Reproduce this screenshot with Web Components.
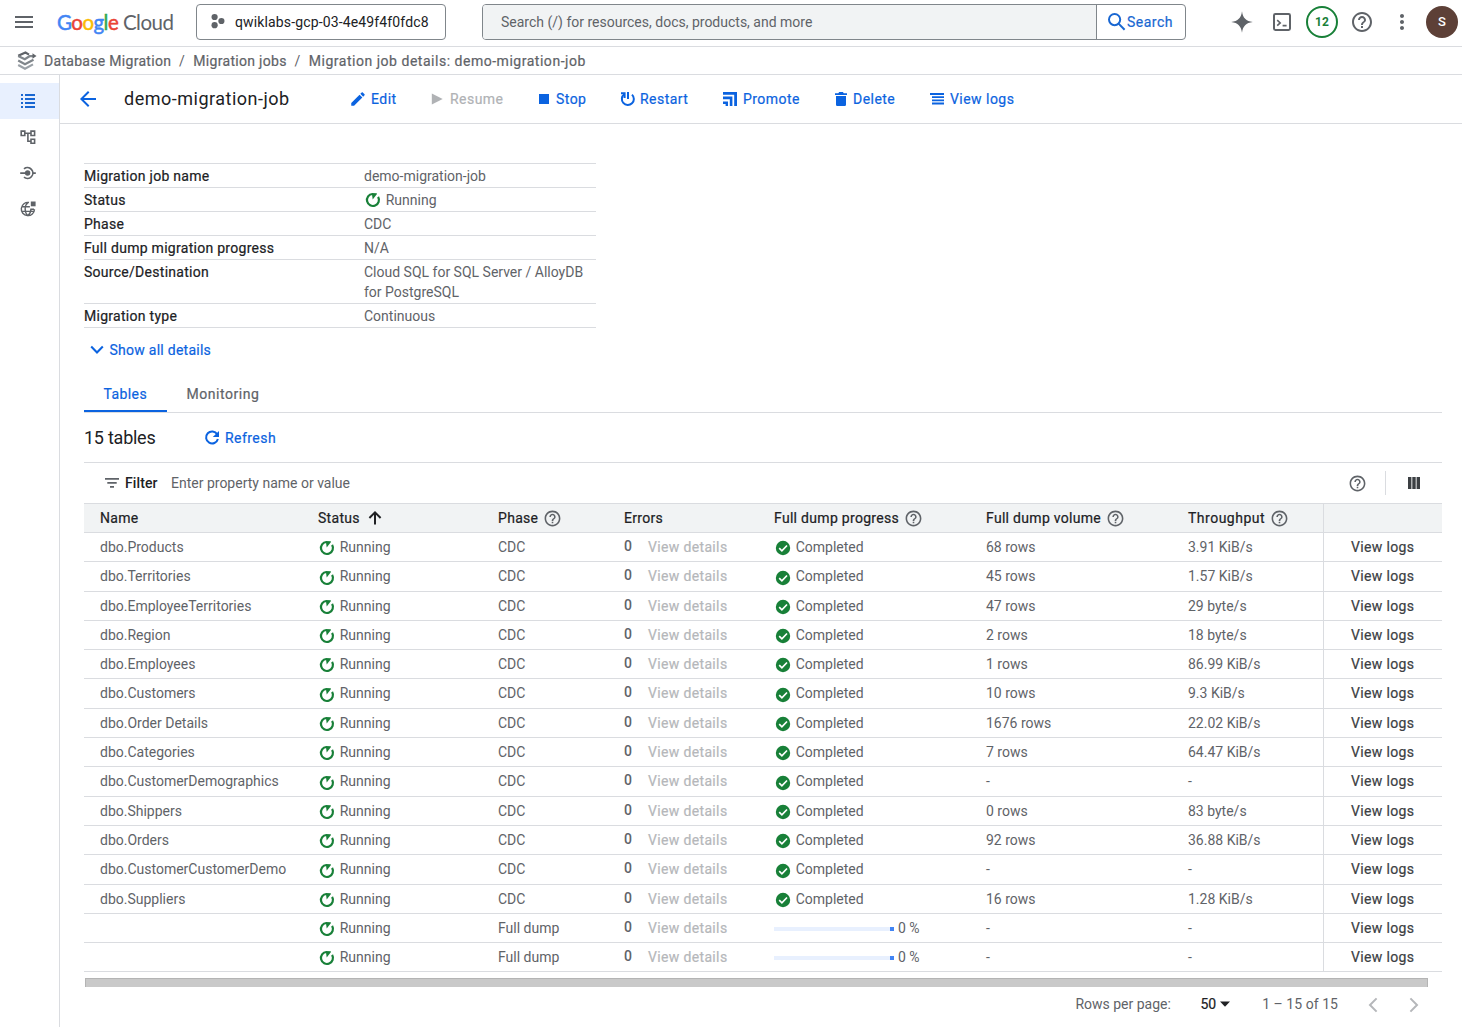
<!DOCTYPE html>
<html lang="en">
<head>
<meta charset="utf-8">
<title>demo-migration-job</title>
<style>
  body {
    margin: 0;
    background: #fff;
    color: #5f6368;
    font: 14px/20px Roboto, Arial, sans-serif;
  }
</style>
</head>
<body>
<console-page></console-page>

<script>
const ICONS = {
  menu: [24, '<path d="M3 18h18v-2H3v2zm0-5h18v-2H3v2zm0-7v2h18V6H3z"/>'],
  project: [18, '<circle cx="5.6" cy="4" r="3.1"/><circle cx="12.4" cy="8" r="3.1"/><circle cx="5.6" cy="12.2" r="3.1"/>'],
  search: [20, '<g fill="none" stroke="currentColor" stroke-width="2"><circle cx="7.6" cy="7.6" r="5.6"/><path d="M11.6 11.6l6 6.2"/></g>'],
  spark: [24, '<path d="M12 1.2C12.9 8 16 11.1 22.8 12 16 12.9 12.9 16 12 22.8 11.1 16 8 12.9 1.2 12 8 11.1 11.1 8 12 1.2z"/>'],
  shell: [20, '<rect x="2" y="2" width="16" height="16" rx="1.4" fill="none" stroke="currentColor" stroke-width="2"/><path d="M5.2 8.2l3 2.7-3 2.7M10.6 13.6h4" fill="none" stroke="currentColor" stroke-width="1.6"/>'],
  help: [24, '<path d="M11 18h2v-2h-2v2zm1-16C6.480 2 2 6.480 2 12s4.480 10 10 10 10-4.480 10-10S17.520 2 12 2zm0 18c-4.410 0-8-3.590-8-8s3.590-8 8-8 8 3.590 8 8-3.590 8-8 8zm0-14c-2.210 0-4 1.790-4 4h2c0-1.100.9-2 2-2s2 .9 2 2c0 2-3 1.750-3 5h2c0-2.250 3-2.500 3-5 0-2.210-1.790-4-4-4z"/>'],
  more: [24, '<path d="M12 8c1.100 0 2-.9 2-2s-.9-2-2-2-2 .9-2 2 .9 2 2 2zm0 2c-1.100 0-2 .9-2 2s.9 2 2 2 2-.9 2-2-.9-2-2-2zm0 6c-1.100 0-2 .9-2 2s.9 2 2 2 2-.9 2-2-.9-2-2-2z"/>'],
  product: [20, '<g fill="none" stroke-width="2.200"><path d="M1.200 4.800L8.500 1.500 12 3.600" stroke="#5f6368"/><path d="M1.200 4.900L7.800 8.200 12.500 5.200H17" stroke="#80868b"/><path d="M1.200 9.500L8 13.200 16.500 8.700" stroke="#80868b"/><path d="M1.200 14L8 17.700 16 13.400" stroke="#9aa0a6"/></g><path d="M15.500 2.200l4 2.900-4 2.600z"/>'],
  list: [18, '<path d="M2 2h2v2H2zM6 2h10v2H6zM2 6h2v2H2zM6 6h10v2H6zM2 10h2v2H2zM6 10h10v2H6zM2 14h2v2H2zM6 14h10v2H6z"/>'],
  tree: [18, '<g fill="none" stroke="currentColor" stroke-width="1.600"><path d="M2.200 3.100h3.600v4.400H2.200zM12 3.100h3.600v4.400H12zM12 11.200h3.600v4H12zM5.800 5.200H12M8.900 5.200v8H12"/></g>'],
  connect: [18, '<path d="M1.200 8.200H6v1.800H1.200zM13.500 8.200h3.300v1.800h-3.300z"/><circle cx="8.600" cy="9" r="2.700"/><path d="M5 4.900A5.400 5.400 0 1 1 5 13.200" fill="none" stroke="currentColor" stroke-width="1.700"/>'],
  globe: [18, '<g fill="none" stroke="currentColor" stroke-width="1.400"><path d="M10 2.500a6.600 6.600 0 1 0 5.500 6.700M9 2.500C5.200 5.500 5.200 12.500 9 15.700 11.500 13.500 12 11 12 8.600M2.900 6.700h8M2.900 11.400h12.200M15 9.200H12"/></g><path d="M11.800 1.500h4.800v4.800h-4.800z"/>'],
  back: [24, '<path d="M20 11H7.830l5.590-5.590L12 4l-8 8 8 8 1.410-1.410L7.830 13H20v-2z"/>'],
  edit: [24, '<path d="M3 17.250V21h3.750L17.810 9.940l-3.750-3.750L3 17.250zM20.710 7.040c.39-.39.39-1.020 0-1.410l-2.340-2.340c-.39-.39-1.020-.39-1.410 0l-1.830 1.830 3.750 3.750 1.830-1.830z"/>'],
  play: [18, '<path d="M3.800 3.500v11l10.900-5.500z"/>'],
  stop: [18, '<path d="M5 4h10v10H5z"/>'],
  restart: [18, '<g fill="none" stroke="currentColor" stroke-width="2"><path d="M6.200 4.200A6 6 0 1 0 14 4.600M10 2V9"/><path d="M3 3.200h3.600V8"/></g>'],
  promote: [18, '<path d="M2 2h14v14h-2.800V4.800H2zM2 6.600h9.400V16H8.800V9.200H2zM2 11.600h5V16H4.600v-2H2z"/>'],
  trash: [18, '<path d="M4 3.300h3.300L8.200 2h3.700l.9 1.300H16v1.800H4zM5 6h10v8.400c0 1-.7 1.600-1.600 1.600H6.600C5.700 16 5 15.400 5 14.400z"/>'],
  logs: [18, '<path d="M2 3h14v1.900H2zM4 6.200h12v1.900H4zM4 9.400h12v1.900H4zM4 12.600h12v1.900H4z"/>'],
  down: [18, '<path d="M3.200 5.600L9 11.400l5.800-5.800" fill="none" stroke="currentColor" stroke-width="2.100"/>'],
  refresh: [18, '<path d="M14.200 5.300A6 6 0 1 0 14.900 10" fill="none" stroke="currentColor" stroke-width="2"/><path d="M16 2v6H9.800z"/>'],
  filter: [18, '<path d="M2 4h14v1.800H2zM4.300 8h9.400v1.800H4.300zM7 12h4v1.800H7z"/>'],
  columns: [18, '<path d="M3 3h3.400v12H3zM7.300 3h3.400v12H7.300zM11.600 3H15v12h-3.400z"/>'],
  up: [18, '<path d="M9 15.500V3.600M3.400 9L9 3.400 14.600 9" fill="none" stroke="currentColor" stroke-width="2"/>'],
  running: [18, '<path d="M14.100 5.900A6 6 0 1 1 8.500 3" fill="none" stroke="currentColor" stroke-width="2.200"/><path d="M7.800 1.900l4.900.3.300.9-4.300 5.300z"/>'],
  done: [18, '<circle cx="9" cy="9" r="7.200"/><path d="M5.200 9.200l2.700 2.600 5.100-5.300" fill="none" stroke="#fff" stroke-width="1.700"/>'],
  left: [18, '<path d="M12.600 2.400L6 9l6.600 6.600" fill="none" stroke="currentColor" stroke-width="2"/>'],
  right: [18, '<path d="M5.400 2.400L12 9l-6.600 6.600" fill="none" stroke="currentColor" stroke-width="2"/>'],
  caret: [18, '<path d="M4 6.500h10l-5 5.200z"/>']
}

// half-step between regular and medium, shared by labels and buttons
const SEMI = 'font-weight: 400; -webkit-text-stroke: .2px;'

class ShadowElement extends HTMLElement {
  constructor() {
    super()
    this.attachShadow({mode: 'open'})
  }

  connectedCallback() {
    this.shadowRoot.innerHTML = `<style>${this.constructor.style}</style>${this.render()}`
  }
}

class GcIcon extends ShadowElement {
  static style = `
    :host { display: inline-flex; flex: none; }
    svg { display: block; fill: currentColor; }
  `

  render() {
    const [box, shape] = ICONS[this.getAttribute('name')]
    const size = this.getAttribute('size') || 18
    return `<svg width="${size}" height="${size}" viewBox="0 0 ${box} ${box}">${shape}</svg>`
  }
}
customElements.define('gc-icon', GcIcon)

class TopBar extends ShadowElement {
  static style = `
    :host {
      display: flex;
      align-items: center;
      box-sizing: border-box;
      height: 47px;
      padding: 0 4px 2px 12px;
      border-bottom: 1px solid #dadce0;
    }
    .logo {
      width: 139px;
      margin-left: 21px;
      font: 20.5px/22px Lato, sans-serif;
      letter-spacing: -.53px;
      white-space: nowrap;
    }
    .logo b { font-weight: 400; -webkit-text-stroke: .5px; }
    .project, .search {
      display: flex;
      align-items: center;
      box-sizing: border-box;
      height: 36px;
      border: 1px solid #80868b;
      border-radius: 4px;
    }
    .project { width: 250px; padding-left: 12px; color: #202124; gap: 8px; letter-spacing: .14px; }
    .project gc-icon { color: #5f6368; }
    .search { width: 704px; margin-left: 36px; overflow: hidden; }
    .query { flex: 1; padding-left: 18px; line-height: 34px; background: #f1f3f4; }
    .go {
      display: flex;
      align-items: center;
      box-sizing: border-box;
      width: 89px;
      height: 100%;
      padding-left: 10px;
      border-left: 1px solid #80868b;
      color: #1967d2;
      ${SEMI}
      letter-spacing: .5px;
    }
    .tools { display: grid; grid-template-columns: repeat(6, 40px); place-items: center; margin-left: auto; margin-right: -4px; }
    .count, .avatar { box-sizing: border-box; width: 32px; height: 32px; border-radius: 50%; text-align: center; }
    .count { border: 2px solid #188038; color: #188038; font: bold 12px/28px Roboto, sans-serif; }
    .avatar { background: #5d4037; color: #fff; font: 500 13px/32px Roboto, sans-serif; }
  `

  render() {
    return `
    <gc-icon name="menu" size="24"></gc-icon>
    <div class="logo"><b style="color:#4285f4">G</b><b style="color:#ea4335">o</b><b style="color:#fbbc04">o</b><b style="color:#4285f4">g</b><b style="color:#34a853">l</b><b style="color:#ea4335">e</b> Cloud</div>
    <div class="project"><gc-icon name="project"></gc-icon><slot name="project"></slot></div>
    <div class="search">
      <div class="query">Search (/) for resources, docs, products, and more</div>
      <div class="go"><gc-icon name="search" size="20"></gc-icon>Search</div>
    </div>
    <div class="tools">
      <gc-icon name="spark" size="24"></gc-icon>
      <gc-icon name="shell" size="20"></gc-icon>
      <div class="count">12</div>
      <gc-icon name="help" size="24"></gc-icon>
      <gc-icon name="more" size="24"></gc-icon>
      <div class="avatar">S</div>
    </div>`
  }
}
customElements.define('top-bar', TopBar)

class BreadCrumbs extends ShadowElement {
  static style = `
    :host {
      display: flex;
      align-items: center;
      height: 27px;
      padding-left: 17px;
      border-bottom: 1px solid #dadce0;
      ${SEMI}
      letter-spacing: .3px;
    }
    gc-icon { margin-right: 7px; }
    span:last-child { letter-spacing: .52px; }
    i { font-style: normal; -webkit-text-stroke: 0; margin: 0 8.200px 0 7.800px; }
  `

  render() {
    const path = this.getAttribute('path').split('|')
    return `<gc-icon name="product" size="20"></gc-icon>${path.map(p => `<span>${p}</span>`).join('<i>/</i>')}`
  }
}
customElements.define('bread-crumbs', BreadCrumbs)

class SideNav extends ShadowElement {
  static style = `
    :host { display: block; width: 59px; padding-top: 8px; border-right: 1px solid #dadce0; }
    div { display: flex; align-items: center; height: 36px; padding-left: 19px; }
    .on { background: #e8f0fe; color: #1967d2; }
  `

  render() {
    return ['list', 'tree', 'connect', 'globe'].map((name, i) =>
      `<div class="${i === 0 ? 'on' : ''}"><gc-icon name="${name}"></gc-icon></div>`).join('')
  }
}
customElements.define('side-nav', SideNav)

class ActionButton extends ShadowElement {
  static style = `
    :host {
      display: inline-flex;
      align-items: center;
      gap: 4px;
      color: #0b63e0;
      ${SEMI}
      letter-spacing: .46px;
      white-space: nowrap;
    }
    :host([disabled]) { color: #b0b2b5; }
  `

  render() {
    return `<gc-icon name="${this.getAttribute('icon')}"></gc-icon><slot></slot>`
  }
}
customElements.define('action-button', ActionButton)

class PageHeader extends ShadowElement {
  static style = `
    :host {
      display: flex;
      align-items: center;
      height: 48px;
      padding-left: 16px;
      border-bottom: 1px solid #dadce0;
    }
    gc-icon { color: #0b63e0; }
    h1 { width: 225px; margin: 0 0 0 24px; color: #202124; font-size: 18px; font-weight: 400; letter-spacing: .5px; }
    .actions { display: grid; grid-template-columns: 79px 106px 84px 103px 110px 97px auto; }
  `

  render() {
    return `
    <gc-icon name="back" size="24"></gc-icon>
    <h1>${this.getAttribute('heading')}</h1>
    <div class="actions"><slot></slot></div>`
  }
}
customElements.define('page-header', PageHeader)

class StatusText extends ShadowElement {
  static style = `
    :host { display: flex; align-items: center; gap: 3.700px; }
    gc-icon { color: #188038; position: relative; top: var(--icon-drop, 0); }
  `

  render() {
    return `<gc-icon name="${this.getAttribute('icon')}"></gc-icon><slot></slot>`
  }
}
customElements.define('status-text', StatusText)

class DetailRow extends ShadowElement {
  static style = `
    :host {
      display: grid;
      grid-template-columns: 280px 232px;
      padding: 2px 0 1px;
      border-bottom: 1px solid #dadce0;
    }
    .label { color: #202124; ${SEMI} letter-spacing: .28px; }
  `

  render() {
    return `<div class="label">${this.getAttribute('label')}</div><div><slot></slot></div>`
  }
}
customElements.define('detail-row', DetailRow)

class TabStrip extends ShadowElement {
  static style = `
    :host { display: flex; height: 36px; border-bottom: 1px solid #dadce0; ${SEMI} letter-spacing: .55px; }
    div { box-sizing: border-box; padding: 8px 19.500px 0; }
    .on { width: 83px; color: #0b63e0; border-bottom: 2px solid #0b63e0; letter-spacing: .4px; }
  `

  render() {
    return `<div class="on">Tables</div><div>Monitoring</div>`
  }
}
customElements.define('tab-strip', TabStrip)

class FilterBar extends ShadowElement {
  static style = `
    :host {
      display: flex;
      align-items: center;
      height: 40px;
      padding: 0 19px;
      border-top: 1px solid #dadce0;
    }
    b { width: 46px; margin-left: 4px; color: #202124; font-weight: 500; letter-spacing: .1px; }
    .help { margin-left: auto; }
    .cols { display: flex; align-items: center; height: 24px; margin-left: 18.500px; padding-left: 19px; border-left: 1px solid #dadce0; color: #3c4043; }
  `

  render() {
    return `
    <gc-icon name="filter"></gc-icon><b>Filter</b><span>Enter property name or value</span>
    <gc-icon class="help" name="help" size="19"></gc-icon>
    <div class="cols"><gc-icon name="columns"></gc-icon></div>`
  }
}
customElements.define('filter-bar', FilterBar)

const GRID = 'grid-template-columns: 218px 180px 126px 150px 212px 202px 151px 119px;'

class TableHead extends ShadowElement {
  static style = `
    :host {
      display: grid;
      ${GRID}
      height: 28px;
      border: solid #dadce0;
      border-width: 1px 0;
      background: #f1f3f4;
      color: #202124;
      ${SEMI}
      letter-spacing: .3px;
    }
    div { display: flex; align-items: center; gap: 5px; padding-left: 16px; }
    gc-icon { color: #5f6368; }
    gc-icon[name=up] { color: #202124; margin-left: 1px; }
    .speed { letter-spacing: .5px; }
    .end { border-left: 1px solid #dadce0; }
  `

  render() {
    const help = '<gc-icon name="help" size="19"></gc-icon>'
    return `
    <div>Name</div>
    <div>Status <gc-icon name="up"></gc-icon></div>
    <div>Phase ${help}</div>
    <div>Errors</div>
    <div>Full dump progress ${help}</div>
    <div>Full dump volume ${help}</div>
    <div class="speed">Throughput ${help}</div>
    <div class="end"></div>`
  }
}
customElements.define('table-head', TableHead)

class TableRow extends ShadowElement {
  static style = `
    :host {
      display: grid;
      ${GRID}
      box-sizing: border-box;
      height: 29.297px;
      border-bottom: 1px solid #dadce0;
      --icon-drop: 1.300px;
    }
    .cell { display: flex; align-items: center; padding: 0 0 .34px 16px; white-space: nowrap; }
    .zero { font-weight: 500; margin: -2px 16px 0 0; }
    .off { color: #b5b7ba; ${SEMI} letter-spacing: .35px; }
    .bar { display: flex; justify-content: flex-end; width: 120px; height: 4px; margin: 1.500px 4px 0 0; background: #e8f0fe; }
    .bar::after { content: ""; width: 4px; background: #4285f4; }
    .end { padding-left: 27px; border-left: 1px solid #dadce0; color: #3c4043; ${SEMI} letter-spacing: .35px; }
  `

  render() {
    const [name, volume, speed] = this.getAttribute('values').split('|')
    const dumping = this.hasAttribute('dumping')
    const progress = dumping
      ? '<div class="bar"></div>0 %'
      : '<status-text icon="done">Completed</status-text>'
    return `
    <div class="cell">${name}</div>
    <div class="cell"><status-text icon="running">Running</status-text></div>
    <div class="cell">${dumping ? 'Full dump' : 'CDC'}</div>
    <div class="cell"><span class="zero">0</span><span class="off">View details</span></div>
    <div class="cell">${progress}</div>
    <div class="cell">${volume}</div>
    <div class="cell">${speed}</div>
    <div class="cell end">View logs</div>`
  }
}
customElements.define('table-row', TableRow)

class TablePaginator extends ShadowElement {
  static style = `
    :host { display: block; }
    .scroll { box-sizing: border-box; height: 9px; margin: 6px 14px 0 1px; background: #c9c9c9; border: 1px solid #b4b4b4; border-bottom: 0; }
    .pages { display: flex; align-items: center; justify-content: flex-end; height: 34px; padding-right: 19px; }
    .size { display: flex; align-items: center; margin: 0 28px 0 29.500px; color: #202124; ${SEMI} }
    .range { margin-right: 26px; letter-spacing: .05px; }
    .nav { color: #b5b7ba; margin-top: 2px; }
    .nav + .nav { margin-left: 23px; }
  `

  render() {
    return `
    <div class="scroll"></div>
    <div class="pages">
      <span>Rows per page:</span>
      <span class="size">50<gc-icon name="caret" size="18"></gc-icon></span>
      <span class="range">1 – 15 of 15</span>
      <gc-icon class="nav" name="left"></gc-icon>
      <gc-icon class="nav" name="right"></gc-icon>
    </div>`
  }
}
customElements.define('table-paginator', TablePaginator)

const ROWS = [
  'dbo.Products|68 rows|3.91 KiB/s',
  'dbo.Territories|45 rows|1.57 KiB/s',
  'dbo.EmployeeTerritories|47 rows|29 byte/s',
  'dbo.Region|2 rows|18 byte/s',
  'dbo.Employees|1 rows|86.99 KiB/s',
  'dbo.Customers|10 rows|9.3 KiB/s',
  'dbo.Order Details|1676 rows|22.02 KiB/s',
  'dbo.Categories|7 rows|64.47 KiB/s',
  'dbo.CustomerDemographics|-|-',
  'dbo.Shippers|0 rows|83 byte/s',
  'dbo.Orders|92 rows|36.88 KiB/s',
  'dbo.CustomerCustomerDemo|-|-',
  'dbo.Suppliers|16 rows|1.28 KiB/s',
  '|-|-',
  '|-|-'
]

class ConsolePage extends ShadowElement {
  static style = `
    :host { display: flex; flex-direction: column; height: 1027px; overflow: hidden; }
    .body { display: flex; flex: 1; }
    main { flex: 1; min-width: 0; }
    .content { padding: 39px 20px 0 24px; }
    .details { width: 512px; border-top: 1px solid #dadce0; }
    .more { display: flex; margin: 12px 0 16px 4px; gap: 3.500px; letter-spacing: .26px; }
    .heading { display: flex; align-items: center; height: 49px; }
    h2 { width: 119px; margin: 0; color: #202124; font-size: 18px; font-weight: 400; letter-spacing: -.25px; }
  `

  render() {
    return `
    <top-bar><span slot="project">qwiklabs-gcp-03-4e49f4f0fdc8</span></top-bar>
    <bread-crumbs path="Database Migration|Migration jobs|Migration job details: demo-migration-job"></bread-crumbs>
    <div class="body">
      <side-nav></side-nav>
      <main>
        <page-header heading="demo-migration-job">
          <action-button icon="edit">Edit</action-button>
          <action-button icon="play" disabled>Resume</action-button>
          <action-button icon="stop">Stop</action-button>
          <action-button icon="restart">Restart</action-button>
          <action-button icon="promote">Promote</action-button>
          <action-button icon="trash">Delete</action-button>
          <action-button icon="logs">View logs</action-button>
        </page-header>
        <div class="content">
          <div class="details">
            <detail-row label="Migration job name">demo-migration-job</detail-row>
            <detail-row label="Status"><status-text icon="running">Running</status-text></detail-row>
            <detail-row label="Phase">CDC</detail-row>
            <detail-row label="Full dump migration progress">N/A</detail-row>
            <detail-row label="Source/Destination">Cloud SQL for SQL Server / AlloyDB for PostgreSQL</detail-row>
            <detail-row label="Migration type">Continuous</detail-row>
          </div>
          <action-button class="more" icon="down">Show all details</action-button>
          <tab-strip></tab-strip>
          <div class="heading"><h2>15 tables</h2><action-button icon="refresh">Refresh</action-button></div>
          <filter-bar></filter-bar>
          <table-head></table-head>
          ${ROWS.map(r => `<table-row values="${r}" ${r[0] === '|' ? 'dumping' : ''}></table-row>`).join('')}
          <table-paginator></table-paginator>
        </div>
      </main>
    </div>`
  }
}
customElements.define('console-page', ConsolePage)
</script>
</body>
</html>
